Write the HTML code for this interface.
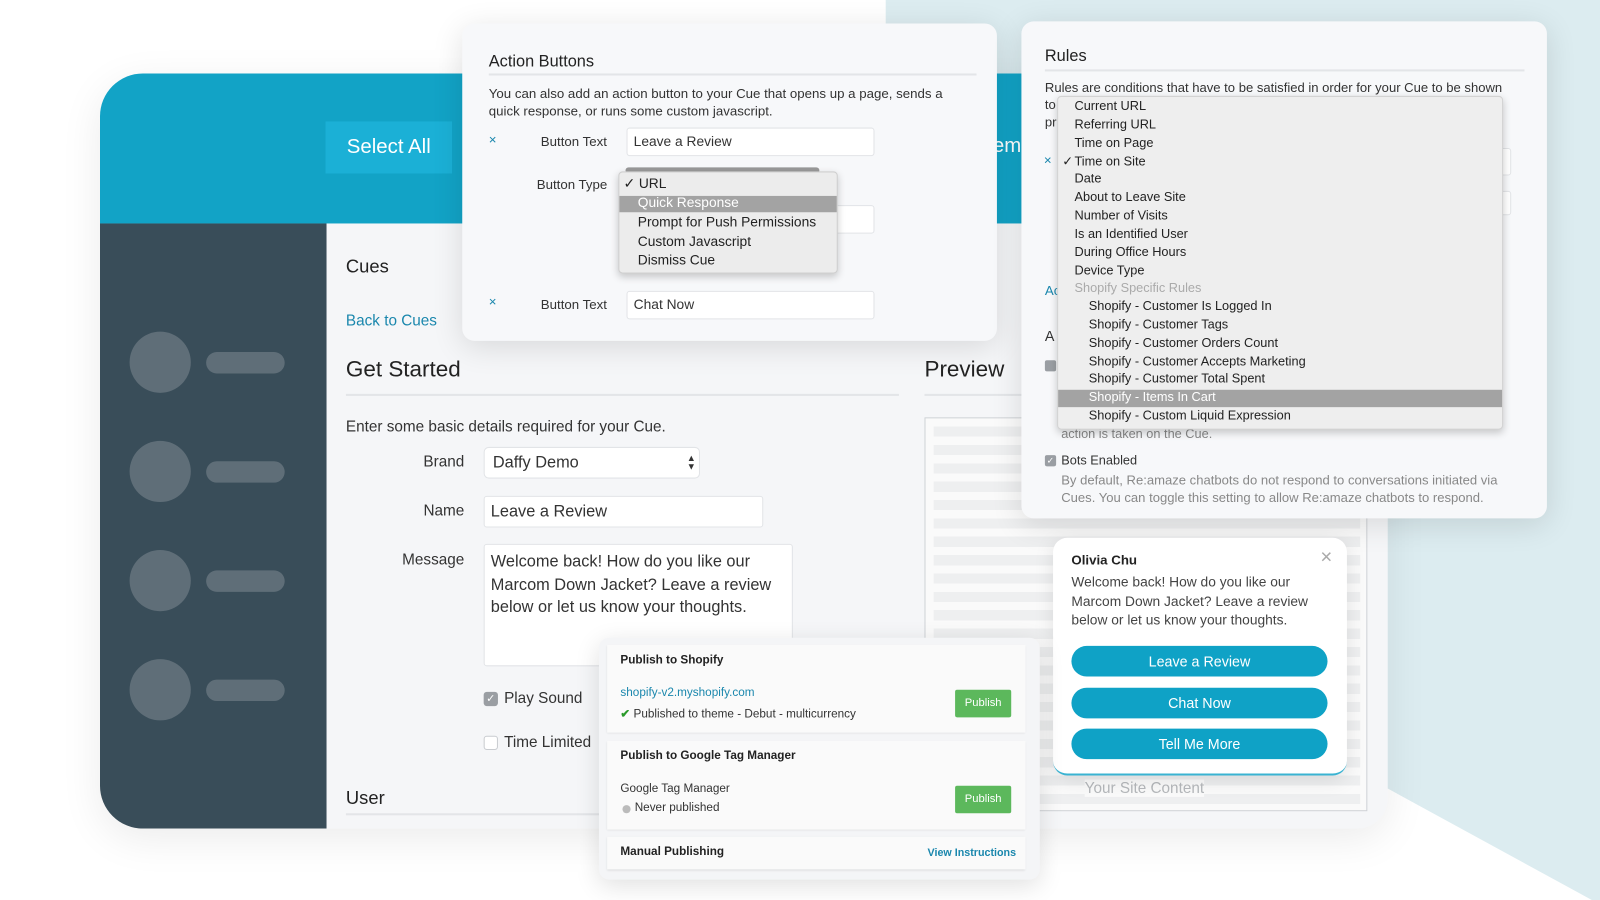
<!DOCTYPE html>
<html><head><meta charset="utf-8"><style>
*{margin:0;padding:0;box-sizing:border-box}
body{width:1600px;height:900px;overflow:hidden;background:#fff;font-family:"Liberation Sans",sans-serif;color:#333;position:relative}
#w{position:absolute;left:0;top:0;width:1568px;height:882px;transform:scale(1.0204);transform-origin:0 0}
.a{position:absolute;white-space:nowrap}
.inp{position:absolute;background:#fff;border:1px solid #e2e4e7;border-radius:3px}
</style></head><body><div id="w">
<svg class="a" style="left:0;top:0" width="1568" height="882"><polygon points="868,0 1568,0 1568,882 1560,882 1300,740 868,740" fill="#dcecf0"/></svg>

<div class="a" style="left:98px;top:72px;width:1262px;height:740px;border-radius:42px 30px 30px 42px;overflow:hidden;background:#f5f6f8;box-shadow:0 10px 40px rgba(0,0,0,.08)">
 <div class="a" style="left:0;top:0;width:1262px;height:147px;background:#12a3c6"></div>
 <div class="a" style="left:221px;top:47px;width:124px;height:51px;background:#1bb0d6;color:#fff;font-size:20px;line-height:51px;text-align:center">Select All</div>
 <div class="a" style="left:875px;top:60px;color:#fff;font-size:20px">emi</div>
 <div class="a" style="left:0;top:147px;width:222px;height:593px;background:#394d59"></div>
</div>
<div class="a" style="left:127px;top:325px;width:60px;height:60px;border-radius:50%;background:#5f6e78"></div>
<div class="a" style="left:202px;top:345px;width:77px;height:21px;border-radius:11px;background:#5f6e78"></div>
<div class="a" style="left:127px;top:432px;width:60px;height:60px;border-radius:50%;background:#5f6e78"></div>
<div class="a" style="left:202px;top:452px;width:77px;height:21px;border-radius:11px;background:#5f6e78"></div>
<div class="a" style="left:127px;top:539px;width:60px;height:60px;border-radius:50%;background:#5f6e78"></div>
<div class="a" style="left:202px;top:559px;width:77px;height:21px;border-radius:11px;background:#5f6e78"></div>
<div class="a" style="left:127px;top:646px;width:60px;height:60px;border-radius:50%;background:#5f6e78"></div>
<div class="a" style="left:202px;top:666px;width:77px;height:21px;border-radius:11px;background:#5f6e78"></div>

<div class="a" style="left:339px;top:251px;font-size:18px;color:#222">Cues</div>
<div class="a" style="left:339px;top:306px;font-size:15px;color:#1a87ad">Back to Cues</div>
<div class="a" style="left:339px;top:349px;font-size:22px;color:#222">Get Started</div>
<div class="a" style="left:339px;top:386px;width:542px;height:2px;background:#e3e5e8"></div>
<div class="a" style="left:906px;top:349px;font-size:22px;color:#222">Preview</div>
<div class="a" style="left:906px;top:386px;width:100px;height:2px;background:#e3e5e8"></div>
<div class="a" style="left:339px;top:410px;font-size:15px;color:#333">Enter some basic details required for your Cue.</div>
<div class="a" style="left:395px;top:444px;width:60px;text-align:right;font-size:15px">Brand</div>
<div class="inp" style="left:474px;top:438px;width:212px;height:31px;border-radius:5px"></div>
<div class="a" style="left:483px;top:445px;font-size:16px">Daffy Demo</div>
<div class="a" style="left:673px;top:445px;font-size:9px;line-height:8px;color:#333">▲<br>▼</div>
<div class="a" style="left:395px;top:492px;width:60px;text-align:right;font-size:15px">Name</div>
<div class="inp" style="left:474px;top:486px;width:274px;height:31px"></div>
<div class="a" style="left:481px;top:493px;font-size:16px">Leave a Review</div>
<div class="a" style="left:385px;top:540px;width:70px;text-align:right;font-size:15px">Message</div>
<div class="inp" style="left:474px;top:533px;width:303px;height:120px"></div>
<div class="a" style="left:481px;top:540px;font-size:16px;line-height:22.5px">Welcome back! How do you like our<br>Marcom Down Jacket? Leave a review<br>below or let us know your thoughts.</div>
<div class="a" style="left:474px;top:678px;width:14px;height:14px;border-radius:3px;background:#9a9ea3;color:#fff;font-size:11px;line-height:14px;text-align:center">✓</div>
<div class="a" style="left:494px;top:676px;font-size:15px">Play Sound</div>
<div class="a" style="left:474px;top:721px;width:14px;height:14px;border-radius:3px;background:#fff;border:1px solid #c9ccd0"></div>
<div class="a" style="left:494px;top:719px;font-size:15px">Time Limited</div>
<div class="a" style="left:339px;top:772px;font-size:18px;color:#222">User</div>
<div class="a" style="left:339px;top:797px;width:260px;height:2px;background:#e3e5e8"></div>

<div class="a" style="left:906px;top:409px;width:434px;height:386px;border:1px solid #cfd2d6;background:#fafafa;overflow:hidden">
 <div style="position:absolute;left:8px;top:8px;width:418px;height:370px;background:repeating-linear-gradient(#eeeff0 0 10px,#fafafa 10px 18px)"></div>
 <div class="a" style="left:156px;top:354px;font-size:15px;color:#b5b8bb;background:#fafafa">Your Site Content</div>
</div>

<div class="a" style="left:453px;top:23px;width:524px;height:311px;background:#f7f8fa;border-radius:12px;box-shadow:0 6px 30px rgba(0,0,0,.12)">
 <div class="a" style="left:26px;top:29px;font-size:16px;color:#222">Action Buttons</div>
 <div class="a" style="left:26px;top:49px;width:478px;height:2px;background:#e3e5e8"></div>
 <div class="a" style="left:26px;top:60px;font-size:13px;line-height:17px;color:#333">You can also add an action button to your Cue that opens up a page, sends a<br>quick response, or runs some custom javascript.</div>
 <div class="a" style="left:26px;top:106px;font-size:13px;color:#1a87ad">×</div>
 <div class="a" style="left:77px;top:108px;font-size:13px">Button Text</div>
 <div class="inp" style="left:161px;top:102px;width:243px;height:28px"></div>
 <div class="a" style="left:168px;top:108px;font-size:13.5px">Leave a Review</div>
 <div class="a" style="left:73px;top:150px;font-size:13px">Button Type</div>
 <div class="inp" style="left:161px;top:178px;width:243px;height:28px"></div>
 <div class="a" style="left:160px;top:141px;width:190px;height:6px;background:#999;border-radius:3px"></div>
 <div class="a" style="left:26px;top:265px;font-size:13px;color:#1a87ad">×</div>
 <div class="a" style="left:77px;top:268px;font-size:13px">Button Text</div>
 <div class="inp" style="left:161px;top:262px;width:243px;height:28px"></div>
 <div class="a" style="left:168px;top:268px;font-size:13.5px">Chat Now</div>
</div>
<div class="a" style="left:606px;top:168px;width:215px;height:100px;background:#ececec;border:1px solid #cfcfcf;border-radius:4px;box-shadow:0 3px 8px rgba(0,0,0,.2);font-size:13.5px;line-height:18.7px;color:#222">
 <div style="position:absolute;left:0;top:23px;width:213px;height:16px;background:#a3a3a3"></div>
 <div style="position:absolute;left:4px;top:2px">✓ URL</div>
 <div style="position:absolute;left:18px;top:21px;color:#fff">Quick Response</div>
 <div style="position:absolute;left:18px;top:40px">Prompt for Push Permissions<br>Custom Javascript<br>Dismiss Cue</div>
</div>

<div class="a" style="left:1001px;top:21px;width:515px;height:487px;background:#f7f8fa;border-radius:12px;box-shadow:0 6px 30px rgba(0,0,0,.12)">
 <div class="a" style="left:23px;top:26px;font-size:16px;color:#222">Rules</div>
 <div class="a" style="left:23px;top:47px;width:470px;height:2px;background:#e3e5e8"></div>
 <div class="a" style="left:23px;top:56px;font-size:12.8px;line-height:17px;color:#333">Rules are conditions that have to be satisfied in order for your Cue to be shown<br>to<br>pr</div>
 <div class="a" style="left:22px;top:128px;font-size:13px;color:#1a87ad">×</div>
 <div class="inp" style="left:400px;top:124px;width:80px;height:27px"></div>
 <div class="inp" style="left:400px;top:166px;width:80px;height:24px"></div>
 <div class="a" style="left:23px;top:256px;font-size:13px;color:#1a87ad">Ac</div>
 <div class="a" style="left:23px;top:300px;font-size:14px">A</div>
 <div class="a" style="left:23px;top:332px;width:11px;height:11px;background:#9a9ea3;border-radius:2px"></div>
 <div class="a" style="left:39px;top:397px;font-size:12.5px;color:#888">action is taken on the Cue.</div>
 <div class="a" style="left:23px;top:425px;width:11px;height:11px;background:#9a9ea3;border-radius:2px;color:#fff;font-size:9px;line-height:11px;text-align:center">✓</div>
 <div class="a" style="left:39px;top:423px;font-size:12.5px;color:#333">Bots Enabled</div>
 <div class="a" style="left:39px;top:441px;font-size:12.8px;line-height:17px;color:#888">By default, Re:amaze chatbots do not respond to conversations initiated via<br>Cues. You can toggle this setting to allow Re:amaze chatbots to respond.</div>
</div>
<div class="a" style="left:1036px;top:94px;width:437px;height:327px;background:#eeeeee;border:1px solid #d3d3d3;border-radius:4px;box-shadow:0 3px 8px rgba(0,0,0,.2);font-size:12.5px;line-height:17.85px;color:#222">
 <div style="position:absolute;left:0;top:287px;width:435px;height:17px;background:#a3a3a3"></div>
 <div style="position:absolute;left:4px;top:55px">✓</div>
 <div style="position:absolute;left:16px;top:1px">Current URL<br>Referring URL<br>Time on Page<br>Time on Site<br>Date<br>About to Leave Site<br>Number of Visits<br>Is an Identified User<br>During Office Hours<br>Device Type<br><span style="color:#aaa">Shopify Specific Rules</span></div>
 <div style="position:absolute;left:30px;top:197px">Shopify - Customer Is Logged In<br>Shopify - Customer Tags<br>Shopify - Customer Orders Count<br>Shopify - Customer Accepts Marketing<br>Shopify - Customer Total Spent<br><span style="color:#fff">Shopify - Items In Cart</span><br>Shopify - Custom Liquid Expression</div>
</div>

<div class="a" style="left:1032px;top:527px;width:288px;height:233px;background:#fff;border-radius:14px;border-bottom:2px solid #3ab3d2;box-shadow:0 4px 20px rgba(0,0,0,.1)">
 <div class="a" style="left:18px;top:14px;font-size:13px;font-weight:bold;color:#222">Olivia Chu</div>
 <div class="a" style="left:262px;top:8px;font-size:20px;color:#aaa">×</div>
 <div class="a" style="left:18px;top:35px;font-size:13.5px;line-height:18.5px;color:#444">Welcome back! How do you like our<br>Marcom Down Jacket? Leave a review<br>below or let us know your thoughts.</div>
 <div class="a" style="left:18px;top:106px;width:251px;height:30px;border-radius:15px;background:#0fa2c6;color:#fff;font-size:14px;line-height:30px;text-align:center">Leave a Review</div>
 <div class="a" style="left:18px;top:147px;width:251px;height:30px;border-radius:15px;background:#0fa2c6;color:#fff;font-size:14px;line-height:30px;text-align:center">Chat Now</div>
 <div class="a" style="left:18px;top:187px;width:251px;height:30px;border-radius:15px;background:#0fa2c6;color:#fff;font-size:14px;line-height:30px;text-align:center">Tell Me More</div>
</div>

<div class="a" style="left:587px;top:625px;width:432px;height:237px;background:#f4f5f7;border-radius:10px;box-shadow:0 6px 24px rgba(0,0,0,.12);font-size:11.5px;color:#333">
 <div class="a" style="left:8px;top:7px;width:410px;height:86px;background:#fafafa;box-shadow:0 1px 2px rgba(0,0,0,.1)"></div>
 <div class="a" style="left:21px;top:16px;font-weight:bold;color:#222">Publish to Shopify</div>
 <div class="a" style="left:21px;top:48px;color:#1a87ad">shopify-v2.myshopify.com</div>
 <div class="a" style="left:21px;top:67px"><span style="color:#2a9a2a;font-weight:bold">✔</span> Published to theme - Debut - multicurrency</div>
 <div class="a" style="left:349px;top:51px;width:55px;height:27px;background:#5cb85c;border-radius:2px;color:#fff;font-size:11px;line-height:27px;text-align:center">Publish</div>
 <div class="a" style="left:8px;top:101px;width:410px;height:87px;background:#fafafa;box-shadow:0 1px 2px rgba(0,0,0,.1)"></div>
 <div class="a" style="left:21px;top:110px;font-weight:bold;color:#222">Publish to Google Tag Manager</div>
 <div class="a" style="left:21px;top:142px">Google Tag Manager</div>
 <div class="a" style="left:23px;top:164px;width:8px;height:8px;border-radius:50%;background:#bbb"></div>
 <div class="a" style="left:35px;top:161px">Never published</div>
 <div class="a" style="left:349px;top:145px;width:55px;height:27px;background:#5cb85c;border-radius:2px;color:#fff;font-size:11px;line-height:27px;text-align:center">Publish</div>
 <div class="a" style="left:8px;top:195px;width:410px;height:32px;background:#fafafa;box-shadow:0 1px 2px rgba(0,0,0,.1)"></div>
 <div class="a" style="left:21px;top:204px;font-weight:bold;color:#222">Manual Publishing</div>
 <div class="a" style="left:322px;top:205px;font-size:10.5px;font-weight:bold;color:#1a87ad">View Instructions</div>
</div>
</div></body></html>
